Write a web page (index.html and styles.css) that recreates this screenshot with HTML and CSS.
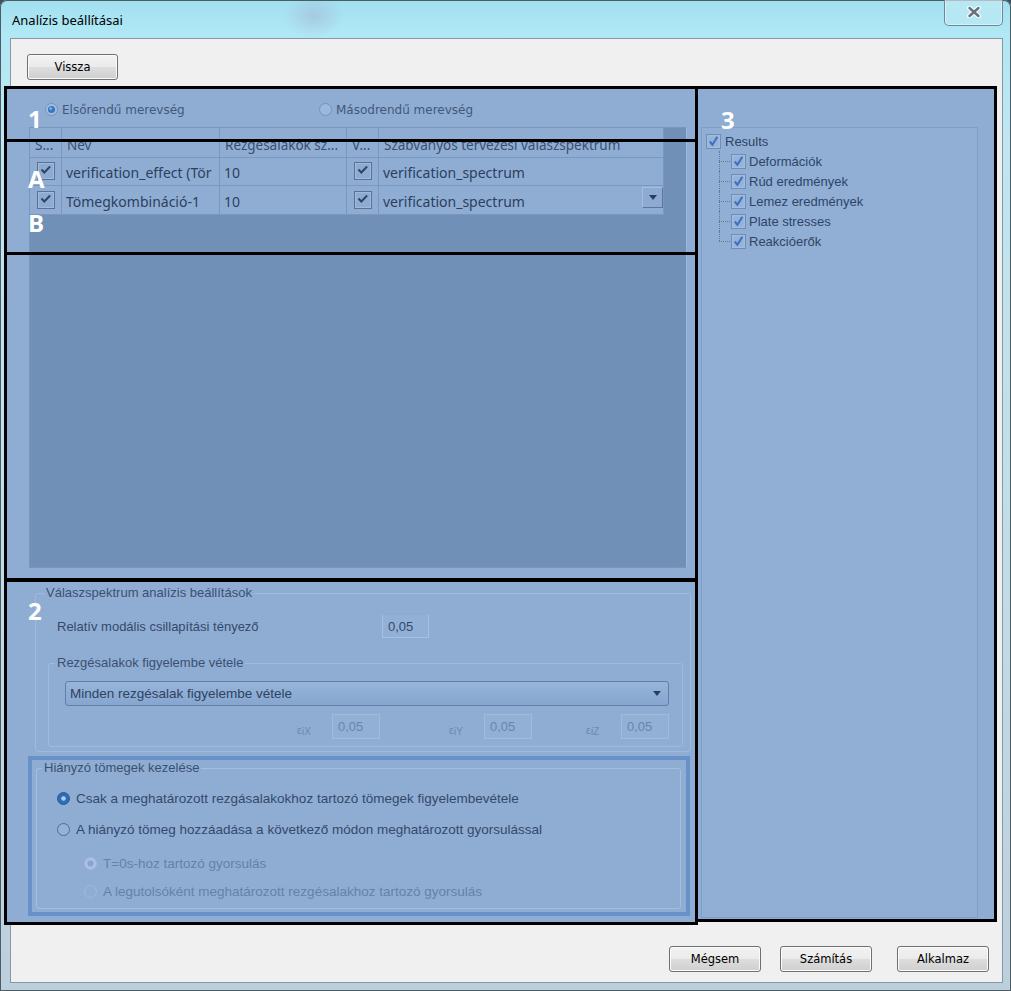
FILE: index.html
```html
<!DOCTYPE html>
<html lang="hu">
<head>
<meta charset="utf-8">
<title>Analízis beállításai</title>
<link rel="stylesheet" href="styles.css">
</head>
<body>
<div class="window">
  <div class="titlebar">
    <span class="title">Analízis beállításai</span>
    <button class="close-btn" aria-label="Bezárás">
      <svg width="14" height="12" viewBox="0 0 14 12"><path d="M2.5 2l9 8M11.5 2l-9 8" stroke="#f4fafc" stroke-width="5" stroke-linecap="round"/><path d="M2.5 2l9 8M11.5 2l-9 8" stroke="#66717d" stroke-width="2.4" stroke-linecap="round"/></svg>
    </button>
  </div>
  <div class="client">
    <div class="toolbar"><button class="btn btn-back">Vissza</button></div>
    <div class="main">
      <div class="left-panel">
        <div class="stiffness">
          <label class="radio-opt opt-first">
            <svg width="13" height="13" viewBox="0 0 13 13"><circle cx="6.5" cy="6.5" r="6" fill="#a3bde0" stroke="#7491b9"/><circle cx="6.5" cy="6.5" r="3.6" fill="#3b76c2"/><circle cx="5.7" cy="5.6" r="1.3" fill="#8fb8e8"/></svg>
            <span>Elsőrendű merevség</span>
          </label>
          <label class="radio-opt">
            <svg width="13" height="13" viewBox="0 0 13 13"><circle cx="6.5" cy="6.5" r="6" fill="#9cb8dc" stroke="#7691b8"/></svg>
            <span>Másodrendű merevség</span>
          </label>
        </div>
        <div class="grid">
          <div class="grid-table">
            <div class="cell head">S...</div>
            <div class="cell head">Név</div>
            <div class="cell head">Rezgésalakok sz...</div>
            <div class="cell head">V...</div>
            <div class="cell head">Szabványos tervezési válaszspektrum</div>

            <div class="cell center"><svg width="18" height="18" viewBox="0 0 18 18"><rect x="0.5" y="0.5" width="17" height="17" fill="#8eacd2" stroke="#5c7093"/><rect x="1.5" y="1.5" width="15" height="15" fill="none" stroke="#a0badd"/><path d="M4.5 7.5l2.8 3 5.8-6" fill="none" stroke="#2f4466" stroke-width="2"/></svg></div>
            <div class="cell">verification_effect (Tör</div>
            <div class="cell">10</div>
            <div class="cell center"><svg width="18" height="18" viewBox="0 0 18 18"><rect x="0.5" y="0.5" width="17" height="17" fill="#8eacd2" stroke="#5c7093"/><rect x="1.5" y="1.5" width="15" height="15" fill="none" stroke="#a0badd"/><path d="M4.5 7.5l2.8 3 5.8-6" fill="none" stroke="#2f4466" stroke-width="2"/></svg></div>
            <div class="cell">verification_spectrum</div>

            <div class="cell center"><svg width="18" height="18" viewBox="0 0 18 18"><rect x="0.5" y="0.5" width="17" height="17" fill="#8eacd2" stroke="#5c7093"/><rect x="1.5" y="1.5" width="15" height="15" fill="none" stroke="#a0badd"/><path d="M4.5 7.5l2.8 3 5.8-6" fill="none" stroke="#2f4466" stroke-width="2"/></svg></div>
            <div class="cell">Tömegkombináció-1</div>
            <div class="cell">10</div>
            <div class="cell center"><svg width="18" height="18" viewBox="0 0 18 18"><rect x="0.5" y="0.5" width="17" height="17" fill="#8eacd2" stroke="#5c7093"/><rect x="1.5" y="1.5" width="15" height="15" fill="none" stroke="#a0badd"/><path d="M4.5 7.5l2.8 3 5.8-6" fill="none" stroke="#2f4466" stroke-width="2"/></svg></div>
            <div class="cell cell-combo"><span>verification_spectrum</span>
              <span class="combo-btn"><svg width="8" height="5" viewBox="0 0 8 5"><path d="M0 0h8L4 5z" fill="#2a3d5b"/></svg></span>
            </div>
          </div>
        </div>

        <fieldset class="group spectrum">
          <legend>Válaszspektrum analízis beállítások</legend>
          <div class="damping-row">
            <span class="damping-label">Relatív modális csillapítási tényező</span>
            <span class="field">0,05</span>
          </div>
          <fieldset class="group modes">
            <legend>Rezgésalakok figyelembe vétele</legend>
            <div class="select">
              <span>Minden rezgésalak figyelembe vétele</span>
              <svg width="8" height="5" viewBox="0 0 8 5"><path d="M0 0h8L4 5z" fill="#2a3d5b"/></svg>
            </div>
            <div class="eps-row">
              <div class="eps-item eps-x"><span class="eps-label">ε<span class="sub">iX</span></span><span class="field disabled">0,05</span></div>
              <div class="eps-item eps-y"><span class="eps-label">ε<span class="sub">iY</span></span><span class="field disabled">0,05</span></div>
              <div class="eps-item eps-z"><span class="eps-label">ε<span class="sub">iZ</span></span><span class="field disabled">0,05</span></div>
            </div>
          </fieldset>
        </fieldset>

        <div class="mass-box">
          <fieldset class="group mass">
            <legend>Hiányzó tömegek kezelése</legend>
            <label class="mass-opt m1">
              <svg width="13" height="13" viewBox="0 0 13 13"><circle cx="6.5" cy="6.5" r="6" fill="#2f6bb6" stroke="#285d9f"/><circle cx="6.5" cy="6.5" r="2.3" fill="#b3cdec"/></svg>
              <span>Csak a meghatározott rezgásalakokhoz tartozó tömegek figyelembevétele</span>
            </label>
            <label class="mass-opt m2">
              <svg width="13" height="13" viewBox="0 0 13 13"><circle cx="6.5" cy="6.5" r="6" fill="#94b2d8" stroke="#50698f"/></svg>
              <span>A hiányzó tömeg hozzáadása a következő módon meghatározott gyorsulással</span>
            </label>
            <label class="mass-opt m3 disabled">
              <svg width="13" height="13" viewBox="0 0 13 13"><circle cx="6.5" cy="6.5" r="6" fill="#a9c1e2" stroke="#a0b9dc"/><circle cx="6.5" cy="6.5" r="3" fill="#86a4cd"/></svg>
              <span>T=0s-hoz tartozó gyorsulás</span>
            </label>
            <label class="mass-opt m4 disabled">
              <svg width="13" height="13" viewBox="0 0 13 13"><circle cx="6.5" cy="6.5" r="6" fill="none" stroke="#a0b9dc"/></svg>
              <span>A legutolsóként meghatározott rezgésalakhoz tartozó gyorsulás</span>
            </label>
          </fieldset>
        </div>
      </div>

      <div class="right-panel">
        <div class="tree">
          <div class="tree-item root">
            <svg width="15" height="15" viewBox="0 0 15 15"><rect x="0.5" y="0.5" width="14" height="14" fill="#a1bbdf" stroke="#6f8db7"/><rect x="2.5" y="2.5" width="10" height="10" fill="#95b2d9"/><path d="M3.8 7.5l2.6 3.2 5-8" fill="none" stroke="#3d70c0" stroke-width="2"/></svg>
            <span>Results</span>
          </div>
          <div class="tree-children">
            <div class="tree-item child"><svg width="15" height="15" viewBox="0 0 15 15"><rect x="0.5" y="0.5" width="14" height="14" fill="#a1bbdf" stroke="#6f8db7"/><rect x="2.5" y="2.5" width="10" height="10" fill="#95b2d9"/><path d="M3.8 7.5l2.6 3.2 5-8" fill="none" stroke="#3d70c0" stroke-width="2"/></svg><span>Deformációk</span></div>
            <div class="tree-item child"><svg width="15" height="15" viewBox="0 0 15 15"><rect x="0.5" y="0.5" width="14" height="14" fill="#a1bbdf" stroke="#6f8db7"/><rect x="2.5" y="2.5" width="10" height="10" fill="#95b2d9"/><path d="M3.8 7.5l2.6 3.2 5-8" fill="none" stroke="#3d70c0" stroke-width="2"/></svg><span>Rúd eredmények</span></div>
            <div class="tree-item child"><svg width="15" height="15" viewBox="0 0 15 15"><rect x="0.5" y="0.5" width="14" height="14" fill="#a1bbdf" stroke="#6f8db7"/><rect x="2.5" y="2.5" width="10" height="10" fill="#95b2d9"/><path d="M3.8 7.5l2.6 3.2 5-8" fill="none" stroke="#3d70c0" stroke-width="2"/></svg><span>Lemez eredmények</span></div>
            <div class="tree-item child"><svg width="15" height="15" viewBox="0 0 15 15"><rect x="0.5" y="0.5" width="14" height="14" fill="#a1bbdf" stroke="#6f8db7"/><rect x="2.5" y="2.5" width="10" height="10" fill="#95b2d9"/><path d="M3.8 7.5l2.6 3.2 5-8" fill="none" stroke="#3d70c0" stroke-width="2"/></svg><span>Plate stresses</span></div>
            <div class="tree-item child last"><svg width="15" height="15" viewBox="0 0 15 15"><rect x="0.5" y="0.5" width="14" height="14" fill="#a1bbdf" stroke="#6f8db7"/><rect x="2.5" y="2.5" width="10" height="10" fill="#95b2d9"/><path d="M3.8 7.5l2.6 3.2 5-8" fill="none" stroke="#3d70c0" stroke-width="2"/></svg><span>Reakcióerők</span></div>
          </div>
        </div>
      </div>

      <div class="annotations" aria-hidden="true">
        <div class="abox ab-1"></div>
        <div class="abox ab-a"></div>
        <div class="abox ab-big"></div>
        <div class="abox ab-2"></div>
        <div class="abox ab-3"></div>
        <span class="alabel al-1">1</span>
        <span class="alabel al-a">A</span>
        <span class="alabel al-b">B</span>
        <span class="alabel al-2">2</span>
        <span class="alabel al-3">3</span>
      </div>
    </div>
    <div class="footer">
      <button class="btn btn-cancel">Mégsem</button>
      <button class="btn btn-calc">Számítás</button>
      <button class="btn">Alkalmaz</button>
    </div>
  </div>
</div>
</body>
</html>
```

FILE: styles.css
```css
* { box-sizing: border-box; }
html, body { margin: 0; padding: 0; }
body {
  width: 1011px;
  height: 991px;
  overflow: hidden;
  background: #3f4d58;
  font-family: "Liberation Sans", Arial, sans-serif;
}

.window {
  width: 1011px;
  height: 991px;
  border-radius: 7px 7px 0 0;
  background:
    radial-gradient(ellipse 30px 22px at 314px 16px, rgba(160, 125, 170, 0.25), rgba(160, 125, 170, 0)),
    linear-gradient(180deg, #a1e0f0 0, #b0e8f5 34px, #bfe6f1 140px, #c2dbe6 600px, #bccfdc 100%);
  box-shadow: inset 0 0 0 1px #4c5c67;
  display: flex;
  flex-direction: column;
}

/* title bar */
.titlebar {
  height: 38px;
  display: flex;
  align-items: flex-start;
  justify-content: space-between;
}
.title {
  font-family: "Noto Sans", sans-serif;
  font-size: 13px;
  line-height: 18px;
  color: #000;
  margin: 11px 0 0 12px;
}
.close-btn {
  width: 59px;
  height: 26px;
  margin: 0 8px 0 0;
  padding: 0 0 2px;
  border: 1px solid #6f8893;
  border-top: none;
  border-radius: 0 0 5px 5px;
  background: linear-gradient(180deg, rgba(255,255,255,0.25), rgba(255,255,255,0.1));
  box-shadow: inset 0 0 0 1px rgba(255,255,255,0.45);
  display: flex;
  align-items: center;
  justify-content: center;
}

/* client area */
.client {
  margin: 0 8px 0 10px;
  width: 993px;
  height: 945px;
  background: #f0f0f0;
  border: 1px solid #8797a3;
  display: flex;
  flex-direction: column;
}
.toolbar {
  height: 47px;
  padding: 15px 0 0 16px;
}
.btn {
  width: 92px;
  height: 26px;
  border: 1px solid #707070;
  border-radius: 3px;
  background: linear-gradient(180deg, #f2f2f2 0%, #ebebeb 48%, #dddddd 52%, #cfcfcf 100%);
  box-shadow: inset 0 0 0 1px #fbfbfb;
  font-family: "DejaVu Sans", sans-serif;
  font-size: 11.5px;
  color: #000;
  padding: 0;
}
.btn-back { width: 91px; }

.main {
  margin-left: -7px;
  width: 993px;
  height: 836px;
  display: flex;
  position: relative;
  background: #8fadd3;
  color: #2e4262;
}

/* left panel */
.left-panel {
  width: 691px;
  flex: none;
}
.stiffness {
  height: 41px;
  padding: 6px 0 0 41px;
  display: flex;
  align-items: center;
  font-family: "DejaVu Sans", sans-serif;
  font-size: 12px;
  color: #41587a;
}
.radio-opt {
  display: flex;
  align-items: center;
  gap: 4px;
}
.opt-first { width: 274px; }

.grid {
  margin-left: 25px;
  width: 658px;
  height: 441px;
  border: 1px solid #7896be;
  border-right-color: #9fb9dc;
  background: #7090b7;
}
.grid-table {
  display: grid;
  grid-template-columns: 32px 158px 127px 32px 285px;
  grid-auto-rows: 29px;
  width: 634px;
  font-family: "Noto Sans", sans-serif;
  font-size: 14px;
  background: #8fadd3;
}
.cell {
  border-right: 1px solid #7a98bf;
  border-bottom: 1px solid #7a98bf;
  display: flex;
  align-items: center;
  padding: 2px 0 0 4px;
  overflow: hidden;
  white-space: nowrap;
  color: #2c3f5e;
  min-width: 0;
}
.cell.head {
  height: 30px;
  padding-top: 5px;
  padding-left: 5px;
  font-size: 13.5px;
  color: #3a4e6e;
}
.cell.center {
  justify-content: center;
  padding: 0;
}
.cell-combo {
  justify-content: space-between;
  align-items: flex-start;
  padding-top: 0;
}
.cell-combo > span:first-child {
  align-self: center;
  padding-top: 2px;
}
.combo-btn {
  width: 21px;
  height: 21px;
  margin-top: 1px;
  border: 1px solid;
  border-color: #a6bfe0 #5d779c #5d779c #a6bfe0;
  background: #8dabd2;
  display: flex;
  align-items: center;
  justify-content: center;
}

/* group boxes */
.group {
  border: 1px solid #a0badd;
  border-radius: 3px;
  margin: 0;
  min-width: 0;
}
.group legend {
  font-size: 13px;
  line-height: 16px;
  padding: 0 2px;
  color: #3b5071;
}
.spectrum {
  margin: 17px 0 0 31px;
  width: 656px;
  padding: 0 7px 4px 12px;
}
.spectrum > legend { margin-left: -4px; }
.damping-row {
  margin-top: 13px;
  height: 24px;
  padding-left: 9px;
  display: flex;
  align-items: center;
  font-size: 13px;
  color: #34496b;
}
.damping-label { width: 325px; }
.field {
  width: 47px;
  height: 24px;
  border: 1px solid #a7bfe0;
  border-top-color: #8eaad0;
  background: #92b0d6;
  padding-left: 5px;
  display: flex;
  align-items: center;
  font-size: 13px;
  color: #34496b;
}
.field.disabled {
  width: 48px;
  height: 25px;
  border-color: #a2bbdd;
  color: #6984ab;
}
.modes {
  margin-top: 17px;
  width: 635px;
  padding: 0 13px 7px 16px;
}
.modes > legend { margin-left: -10px; }
.select {
  margin-top: 10px;
  width: 604px;
  height: 25px;
  border: 1px solid #5f80aa;
  border-radius: 3px;
  background: linear-gradient(180deg, #97b5da, #86a6cf);
  display: flex;
  align-items: center;
  justify-content: space-between;
  padding: 0 7px 0 4px;
  font-size: 13.5px;
  color: #2e4262;
}
.eps-row {
  margin-top: 8px;
  height: 25px;
  display: flex;
}
.eps-item {
  display: flex;
  align-items: center;
}
.eps-x { margin-left: 232px; }
.eps-y { margin-left: 69px; }
.eps-z { margin-left: 54px; }
.eps-label {
  width: 35px;
  font-size: 11px;
  color: #6d88ae;
  padding-top: 6px;
}
.eps-label .sub {
  font-size: 10px;
  position: relative;
  top: 1px;
}

.mass-box {
  margin: 4px 0 0 24px;
  width: 662px;
  height: 160px;
  border: 4px solid #6891c8;
  padding: 0 5px 3px 4px;
}
.mass {
  height: 149px;
  padding: 0 0 0 20px;
  border-color: #a5bee0;
}
.mass > legend { margin-left: -15px; }
.mass-opt {
  height: 20px;
  display: flex;
  align-items: center;
  gap: 6px;
  font-size: 13.5px;
  color: #34496a;
}
.mass-opt.disabled { color: #6581a9; padding-left: 27px; }
.m1 { margin-top: 12px; }
.m2 { margin-top: 11px; }
.m3 { margin-top: 14px; }
.m4 { margin-top: 8px; }

/* right panel */
.right-panel {
  width: 302px;
  flex: none;
}
.tree {
  margin: 41px 0 0 6px;
  width: 277px;
  height: 791px;
  border: 1px solid #7f9dc5;
  background: #91afd5;
  padding: 3px 0 0 4px;
  font-size: 13px;
  color: #2e4466;
}
.tree-item {
  height: 20px;
  display: flex;
  align-items: center;
}
.tree-item.root { gap: 4px; }
.tree-children { margin-left: 13px; }
.tree-item.child {
  position: relative;
  padding-left: 12px;
  gap: 3px;
}
.tree-item.child::before {
  content: "";
  position: absolute;
  left: 0;
  top: 0;
  bottom: 0;
  border-left: 1px dotted #5d7699;
}
.tree-item.child.last::before { bottom: 50%; }
.tree-item.child::after {
  content: "";
  position: absolute;
  left: 0;
  top: 50%;
  width: 11px;
  border-top: 1px dotted #5d7699;
}

/* annotation overlay */
.annotations {
  position: absolute;
  inset: 0;
  pointer-events: none;
}
.abox {
  position: absolute;
  border: 3px solid #000;
}
.ab-1 { left: 0; top: 0; width: 694px; height: 56px; }
.ab-a { left: 0; top: 53px; width: 694px; height: 116px; }
.ab-big { left: 0; top: 166px; width: 694px; height: 330px; }
.ab-2 { left: 0; top: 492px; width: 694px; height: 347px; }
.ab-3 { left: 691px; top: 0; width: 302px; height: 836px; }
.alabel {
  position: absolute;
  font-family: "Open Sans", sans-serif;
  font-weight: 700;
  font-size: 24px;
  line-height: 24px;
  color: #fff;
}
.al-1 { left: 24px; top: 21px; }
.al-a { left: 24px; top: 81px; }
.al-b { left: 24px; top: 125px; }
.al-2 { left: 24px; top: 513px; }
.al-3 { left: 717px; top: 22px; }

/* footer */
.footer {
  flex: 1;
  display: flex;
  justify-content: flex-end;
  padding: 24px 13px 0 0;
}
.btn-cancel { margin-right: 19px; }
.btn-calc { margin-right: 25px; }
```
